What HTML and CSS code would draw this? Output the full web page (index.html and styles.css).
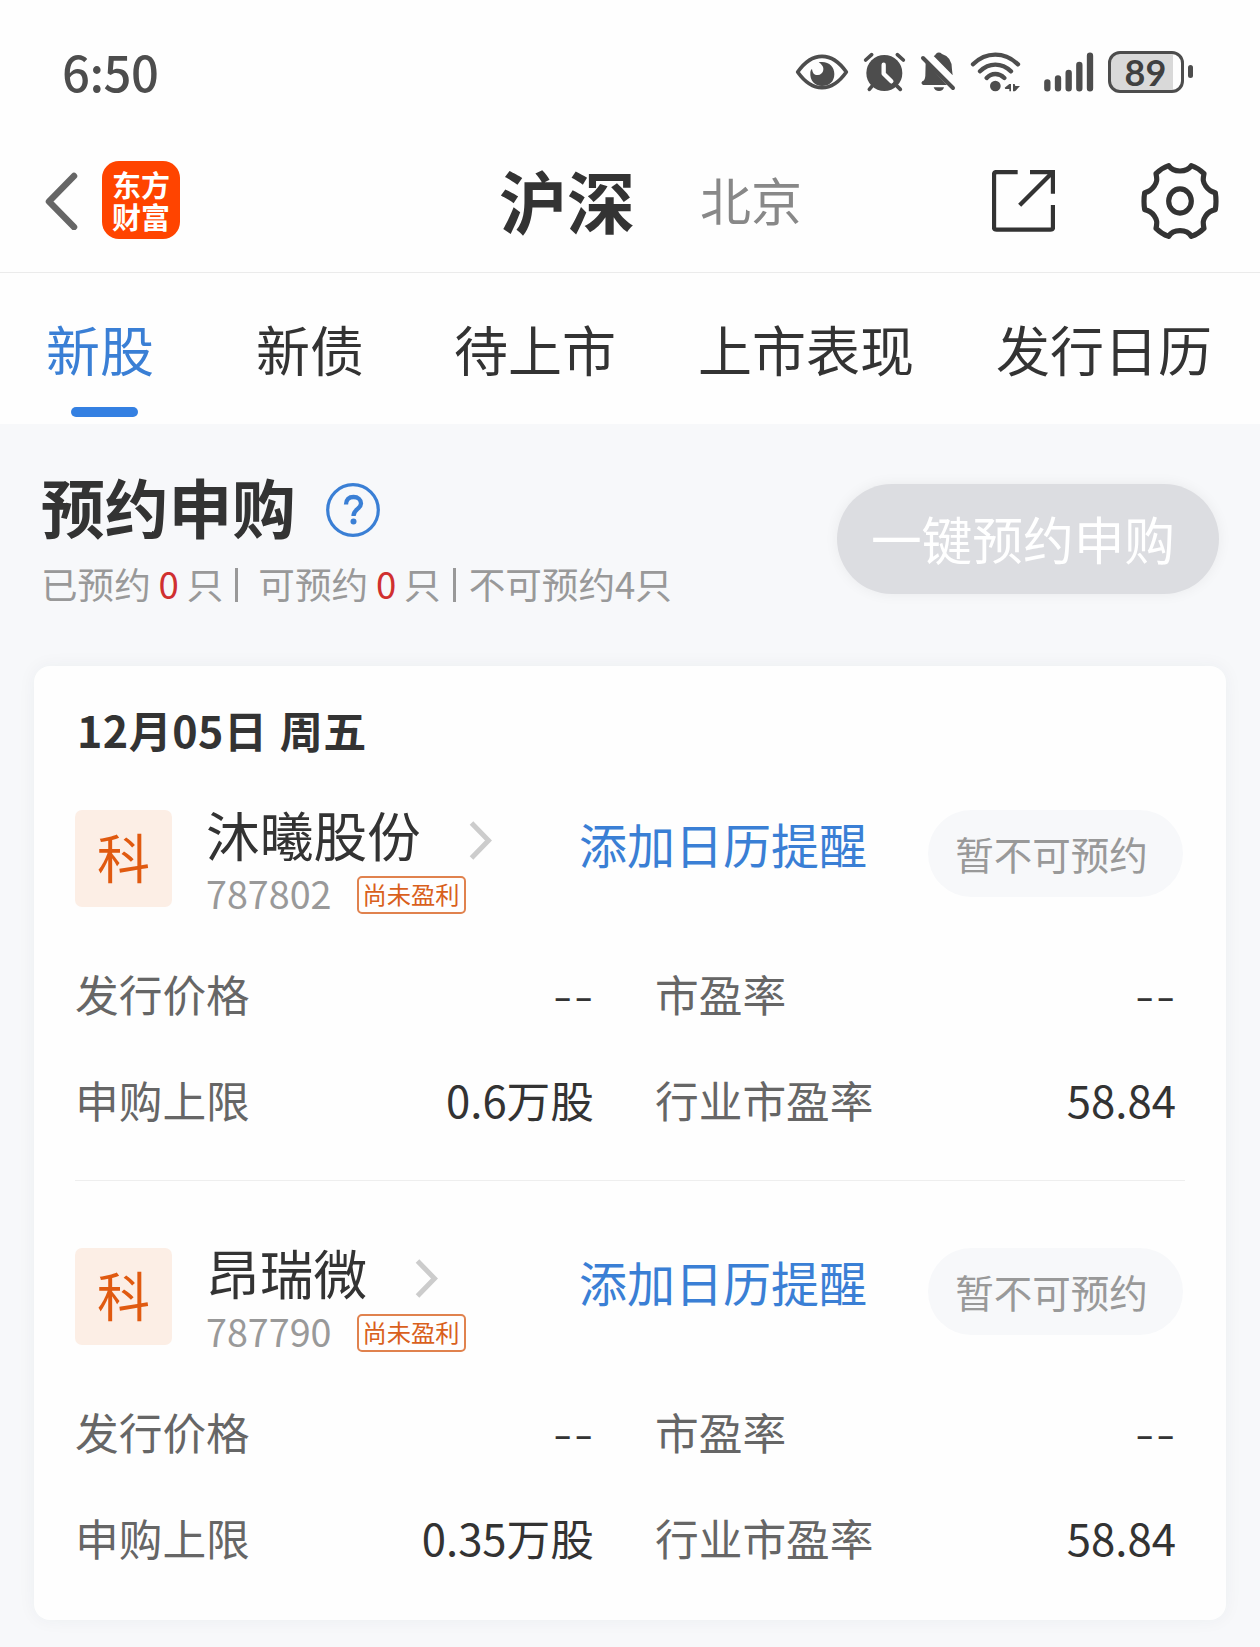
FILE: index.html
```html
<!DOCTYPE html>
<html lang="zh-CN">
<head>
<meta charset="utf-8">
<title>新股申购</title>
<link rel="stylesheet" href="styles.css">
</head>
<body>
<div class="status">
  <div class="clock">6:50</div>
  <div class="status-icons">
    <svg class="eye" viewBox="45 60 165 135" width="55" height="45"><path d="M53 126Q86 79 126 79Q166 79 199 126Q166 173 126 173Q86 173 53 126Z" fill="none" stroke="#4d4d4d" stroke-width="11" stroke-linejoin="round"/><path d="M116 97C145 92 163 109 163 132C163 155 148 168 126 168C104 168 89 152 91 127C92 121 93 119 96 117C98 131 104 136 114 135C129 133 134 117 127 107Q123 101 116 97Z" fill="#4d4d4d"/></svg>
    <svg class="alarm" viewBox="246 60 135 135" width="45" height="45"><circle cx="313" cy="129" r="54" fill="#4d4d4d"/><path d="M257 90L275 74M352 74L370 90M278 166L268 178M349 166L361 178" stroke="#4d4d4d" stroke-width="11" stroke-linecap="round"/><path d="M311 104V131L334 154" fill="none" stroke="#fff" stroke-width="13" stroke-linecap="round" stroke-linejoin="round"/></svg>
    <svg class="bell" viewBox="420 60 108 135" width="36" height="45"><path d="M437 97L501 165H429Q421 160 427 154Q435 151 436 137ZM461 78Q466 76 468 71Q477 64 486 72Q517 81 516 119L518 136ZM461 172H492Q490 183 477 183Q464 183 461 172Z" fill="#4d4d4d"/><path d="M429 84L519 174" stroke="#4d4d4d" stroke-width="12" stroke-linecap="round"/></svg>
    <svg class="wifi" viewBox="570 60 153 135" width="51" height="45"><path d="M579 103Q608 74 646 74Q684 74 714 103M600 124Q620 104 646 104Q672 104 693 124M620 144Q631 132 646 132Q661 132 673 144" fill="none" stroke="#4d4d4d" stroke-width="13" stroke-linecap="round"/><circle cx="646" cy="168" r="16" fill="#4d4d4d"/><path d="M674 173L688 162H693V184H688V177H676ZM699 162H704L706 168H720L707 182L704 184H699Z" fill="#4d4d4d"/></svg>
    <svg class="signal" viewBox="789 60 153 135" width="51" height="45"><path d="M802 157V175M834 145V175M866 129V175M898 105V175M930 77V175" stroke="#4d4d4d" stroke-width="19" stroke-linecap="round"/></svg>
    <div class="battery"><span>89</span></div><i class="battery-tip"></i>
  </div>
</div>

<header class="header">
  <svg class="back" viewBox="0 0 34 58" width="34" height="58"><path d="M29 4L4 29.5L29 55" fill="none" stroke="#666" stroke-width="6.5" stroke-linecap="round" stroke-linejoin="round"/></svg>
  <div class="logo">东方<br>财富</div>
  <div class="market active">沪深</div>
  <div class="market">北京</div>
  <svg class="share" viewBox="396 90 189 186" width="63" height="62"><path d="M473 96H410Q402 96 402 104V262Q402 269 410 269H571Q579 269 579 262V195M510 96H579V161M578 97L479 196" fill="none" stroke="#333" stroke-width="13"/></svg>
  <svg class="gear" viewBox="843 66 234 234" width="78" height="78"><g fill="none" stroke="#333" stroke-width="15.500" stroke-linejoin="round"><path d="M926 77Q936 93 960 93Q984 93 994 77Q1015 84 1032 101C1028 120 1029 125 1037 138Q1048 154 1066 158Q1070 184 1066 209Q1048 212 1037 228C1029 240 1028 247 1032 265Q1015 282 994 289Q984 272 960 272Q936 272 926 289Q905 282 888 265C892 247 891 240 883 228Q872 212 854 209Q850 184 854 158Q872 154 883 138C891 125 892 120 888 101Q905 84 926 77Z"/><ellipse cx="960" cy="183" rx="34" ry="36.500"/></g></svg>
</header>

<nav class="tabs">
  <a class="tab current">新股</a>
  <a class="tab bonds">新债</a>
  <a class="tab pending">待上市</a>
  <a class="tab listed">上市表现</a>
  <a class="tab calendar">发行日历</a>
</nav>

<main>
  <section class="summary">
    <div>
      <h1>预约申购
        <svg viewBox="0 0 54 54" width="54" height="54"><circle cx="27" cy="27" r="25.3" fill="none" stroke="#3a7fd5" stroke-width="3.2"/><path d="M20 21.5C20 16.5 23 14 27.5 14C32 14 35 16.700 35 20.500C35 26 27.500 26 27.500 33" fill="none" stroke="#3a7fd5" stroke-width="4.300"/><circle cx="27.500" cy="38.500" r="3" fill="#3a7fd5"/></svg>
      </h1>
      <p class="counts"><span>已预约</span><b>0</b><span>只</span><i></i><span class="can">可预约</span><b>0</b><span>只</span><i></i><span class="cannot">不可预约4只</span></p>
    </div>
    <button class="reserve-all">一键预约申购</button>
  </section>

  <section class="card">
    <h2>12月05日 周五</h2>
    <article class="stock">
      <div class="top">
        <div class="board">科</div>
        <div class="ident">
          <div class="name">沐曦股份<svg viewBox="0 0 24 40" width="24" height="40"><path d="M2.500 2L19.500 19.500L2.500 37" fill="none" stroke="#ccc" stroke-width="5"/></svg></div>
          <div class="code"><span>787802</span><span class="tag">尚未盈利</span></div>
        </div>
        <a class="remind">添加日历提醒</a>
        <button class="unavailable">暂不可预约</button>
      </div>
      <dl>
        <dt>发行价格</dt><dd class="dash">--</dd><dt>市盈率</dt><dd class="dash">--</dd>
        <dt>申购上限</dt><dd>0.6万股</dd><dt>行业市盈率</dt><dd>58.84</dd>
      </dl>
    </article>
    <article class="stock">
      <div class="top">
        <div class="board">科</div>
        <div class="ident">
          <div class="name">昂瑞微<svg viewBox="0 0 24 40" width="24" height="40"><path d="M2.500 2L19.500 19.500L2.500 37" fill="none" stroke="#ccc" stroke-width="5"/></svg></div>
          <div class="code"><span>787790</span><span class="tag">尚未盈利</span></div>
        </div>
        <a class="remind">添加日历提醒</a>
        <button class="unavailable">暂不可预约</button>
      </div>
      <dl>
        <dt>发行价格</dt><dd class="dash">--</dd><dt>市盈率</dt><dd class="dash">--</dd>
        <dt>申购上限</dt><dd>0.35万股</dd><dt>行业市盈率</dt><dd>58.84</dd>
      </dl>
    </article>
  </section>
</main>
</body>
</html>
```
FILE: styles.css
```css
* { box-sizing: border-box; }
body {
  margin: 0;
  width: 1260px;
  height: 1647px;
  overflow: hidden;
  background: #fefefe;
  color: #333;
  font-family: "Noto Sans CJK SC", sans-serif;
}
h1, h2, p, dl, dd { margin: 0; }
svg { display: block; flex: none; }
button { border: 0; padding: 0; font-family: inherit; white-space: nowrap; }

/* status bar */
.status {
  display: flex;
  justify-content: space-between;
  height: 128px;
  padding: 50px 67px 0 62px;
}
.clock {
  color: #4d4d4d;
  font-size: 49px;
  font-weight: 500;
  line-height: 42px;
  letter-spacing: -0.5px;
}
.status-icons { display: flex; height: 45px; }
.alarm { margin-left: 12px; }
.bell { margin-left: 13px; }
.wifi { margin-left: 14px; }
.signal { margin-left: 22px; }
.battery {
  width: 76px;
  height: 42px;
  margin: 1px 0 0 14px;
  border: 3px solid #4d4d4d;
  border-radius: 12px;
  background: linear-gradient(90deg, #d9d9d9 62px, #fefefe 62px);
  color: #404040;
  font: 700 36px/36px Lato, sans-serif;
  text-align: center;
}
.battery span { display: block; margin-left: -1px; }
.battery-tip {
  width: 5px;
  height: 13px;
  margin: 15px 0 0 4px;
  border-radius: 3px;
  background: #4d4d4d;
}

/* page header */
.header {
  display: flex;
  align-items: flex-start;
  height: 145px;
  padding-left: 45px;
  border-bottom: 1px solid #ebebeb;
}
.back { margin-top: 44px; }
.logo {
  width: 78px;
  height: 78px;
  margin: 33px 0 0 23px;
  padding-top: 7px;
  border-radius: 17px;
  background: #ff4400;
  color: #fff;
  font-size: 29px;
  font-weight: 700;
  line-height: 32px;
  text-align: center;
}
.market {
  margin: 26px 0 0 65px;
  color: #888;
  font-size: 51px;
  line-height: 90px;
}
.market.active {
  margin: 27px 0 0 319px;
  color: #333;
  font-size: 68px;
  font-weight: 700;
}
.share { margin: 42px 0 0 190px; }
.gear { margin: 34px 0 0 86px; }

/* category tabs */
.tabs {
  display: flex;
  height: 151px;
  padding: 40px 0 0 46px;
}
.tab {
  font-size: 54px;
  line-height: 72px;
}
.bonds { margin-left: 102px; }
.pending { margin-left: 90px; }
.listed { margin-left: 82px; }
.calendar { margin-left: 82px; }
.tab.current { color: #3a7fd5; }
.tab.current::after {
  content: "";
  display: block;
  width: 67px;
  height: 10px;
  margin: 22px 0 0 25px;
  border-radius: 5px;
  background: #3480e2;
}

main {
  height: 1223px;
  background: #f7f8fa;
}

/* reservation summary */
.summary {
  display: flex;
  justify-content: space-between;
  height: 242px;
  padding: 40px 41px 0 41px;
}
h1 {
  display: flex;
  align-items: center;
  gap: 30px;
  height: 84px;
  font-size: 63.700px;
  font-weight: 700;
  line-height: 80px;
  padding-bottom: 3px;
}
h1 svg { margin-top: 10px; }
.counts {
  display: flex;
  margin-top: 9px;
  color: #999;
  font-size: 36.600px;
  line-height: 54px;
}
.counts b {
  width: 36px;
  color: #d03030;
  font-weight: 400;
  text-align: center;
}
.counts i {
  width: 3px;
  height: 34px;
  margin: 11px 0 0 12px;
  background: #999;
}
.counts .can { margin-left: 20px; }
.counts .cannot { margin-left: 13px; }
.reserve-all {
  width: 382px;
  height: 110px;
  margin-top: 20px;
  padding: 0 10px 2px 0;
  border-radius: 55px;
  background: #dcdde1;
  box-shadow: 0 0 14px rgba(0, 0, 0, 0.06);
  color: #fff;
  font-size: 50.700px;
}

/* subscription list */
.card {
  width: 1192px;
  height: 954px;
  margin-left: 34px;
  padding: 37px 41px 0;
  border-radius: 16px;
  background: #fefefe;
  box-shadow: 0 0 18px rgba(40, 60, 80, 0.05);
}
h2 {
  height: 107px;
  padding-left: 2px;
  font-size: 43px;
  font-weight: 700;
  line-height: 52px;
  letter-spacing: 0.5px;
  word-spacing: 2px;
}
.stock { height: 370px; }
.stock + .stock {
  height: auto;
  padding-top: 67px;
  border-top: 1px solid #eee;
}
.top {
  display: flex;
  align-items: flex-start;
  height: 130px;
}
.board {
  width: 97px;
  height: 97px;
  border-radius: 7px;
  background: #fceee5;
  color: #e05a10;
  font-size: 53px;
  line-height: 93px;
  text-align: center;
}
.ident {
  width: 373px;
  margin-left: 34px;
}
.name {
  display: flex;
  align-items: center;
  height: 44px;
  font-size: 53.700px;
  line-height: 80px;
  padding-top: 4px;
}
.name svg { margin: 14px 0 0 48px; }
.code {
  display: flex;
  align-items: center;
  height: 80px;
  color: #999;
  font-size: 37.700px;
  line-height: 54px;
}
.code > span:first-child { padding-bottom: 2px; }
.code .tag {
  width: 109px;
  height: 38px;
  margin: 2px 0 0 25px;
  border: 2px solid #e0824e;
  border-radius: 5px;
  color: #d9601c;
  font-size: 24.300px;
  line-height: 32px;
  text-align: center;
  white-space: nowrap;
}
.remind {
  margin-top: 1px;
  color: #3a7fd5;
  font-size: 48px;
  line-height: 64px;
}
.unavailable {
  width: 255px;
  height: 87px;
  margin-left: 61px;
  padding: 0 8px 2px 0;
  border-radius: 44px;
  background: #f7f8fa;
  color: #999;
  font-size: 38.500px;
}
dl {
  display: grid;
  grid-template-columns: 174px 345px 278px 304px;
  grid-auto-rows: 106px;
  line-height: 107px;
  font-size: 43.700px;
}
dt { color: #666; white-space: nowrap; }
dt:nth-of-type(even) { padding-left: 61px; }
dd { text-align: right; }
.dash {
  padding-top: 4px;
  font-family: Inter, sans-serif;
  font-size: 46px;
  font-weight: 300;
}
```
